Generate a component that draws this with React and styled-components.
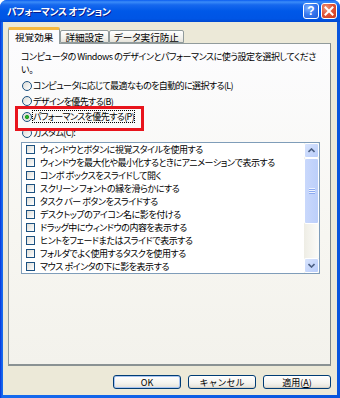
import React from "react";
import styled, { createGlobalStyle } from "styled-components";

const GlobalStyle = createGlobalStyle`
  html, body {
    margin: 0;
    padding: 0;
    background: #ffffff;
  }
  body {
    font-family: "Noto Sans CJK JP", "Noto Sans", sans-serif;
    font-feature-settings: "palt";
  }
`;

const effects = [
  "ウィンドウとボタンに視覚スタイルを使用する",
  "ウィンドウを最大化や最小化するときにアニメーションで表示する",
  "コンボ ボックスをスライドして開く",
  "スクリーン フォントの縁を滑らかにする",
  "タスク バー ボタンをスライドする",
  "デスクトップのアイコン名に影を付ける",
  "ドラッグ中にウィンドウの内容を表示する",
  "ヒントをフェードまたはスライドで表示する",
  "フォルダでよく使用するタスクを使用する",
  "マウス ポインタの下に影を表示する",
];

const choices = [
  { id: "auto", label: "コンピュータに応じて最適なものを自動的に選択する(L)" },
  { id: "design", label: "デザインを優先する(B)" },
  { id: "perf", label: "パフォーマンスを優先する(P)", checked: true, marked: true },
  { id: "custom", label: "カスタム(C):" },
];

export default function App() {
  return (
    <>
      <GlobalStyle />
      <Window>
        <TitleBar>
          <Title>パフォーマンス オプション</Title>
          <CaptionButton $kind="help">?</CaptionButton>
          <CaptionButton $kind="close">
            <svg width="10" height="10" viewBox="0 0 10 10">
              <path d="M1.5 1.5 L8.5 8.5 M8.5 1.5 L1.5 8.5" stroke="#fff" strokeWidth="2" strokeLinecap="square" />
            </svg>
          </CaptionButton>
        </TitleBar>

        <Body>
          <Tabs>
            <Tab $active>視覚効果</Tab>
            <Tab>詳細設定</Tab>
            <Tab>データ実行防止</Tab>
          </Tabs>

          <Panel>
            <Intro>
              コンピュータの Windows のデザインとパフォーマンスに使う設定を選択してくださ
              <br />
              い。
            </Intro>

            <RadioGroup>
              {choices.map((c) => (
                <RadioRow key={c.id}>
                  <Radio $checked={c.checked} />
                  <RadioLabel $focused={c.marked}>{c.label}</RadioLabel>
                  {c.marked && <Highlight />}
                </RadioRow>
              ))}
            </RadioGroup>

            <ListBox>
              <Items>
                {effects.map((text) => (
                  <Item key={text}>
                    <Check />
                    <span>{text}</span>
                  </Item>
                ))}
              </Items>
              <ScrollBar>
                <ScrollButton>
                  <svg width="7" height="5" viewBox="0 0 7 5">
                    <path d="M0.5 4 L3.5 1 L6.5 4" fill="none" stroke="#4d6185" strokeWidth="1.6" />
                  </svg>
                </ScrollButton>
                <Track>
                  <Thumb>
                    <Grip />
                  </Thumb>
                </Track>
                <ScrollButton>
                  <svg width="7" height="5" viewBox="0 0 7 5">
                    <path d="M0.5 1 L3.5 4 L6.5 1" fill="none" stroke="#4d6185" strokeWidth="1.6" />
                  </svg>
                </ScrollButton>
              </ScrollBar>
            </ListBox>
          </Panel>

          <Buttons>
            <Button $default>OK</Button>
            <Button>キャンセル</Button>
            <Button>
              適用(<u>A</u>)
            </Button>
          </Buttons>
        </Body>
      </Window>
    </>
  );
}

const Window = styled.div`
  width: 340px;
  height: 398px;
  display: flex;
  flex-direction: column;
  background: linear-gradient(to right, #0831d9 0, #166aee 2px, #0855dd 100%);
  border-radius: 7px 7px 0 0;
  overflow: hidden;
`;

const TitleBar = styled.div`
  height: 22px;
  flex: none;
  display: flex;
  align-items: center;
  gap: 2px;
  padding: 0 3px 0 7px;
  background: linear-gradient(
    to bottom,
    #0a5cf0 0%,
    #3b8cf8 9%,
    #1668ee 22%,
    #0058e8 50%,
    #0055e5 85%,
    #0048d0 100%
  );
`;

const Title = styled.span`
  flex: 1;
  color: #ffffff;
  font-size: 9.6px;
  font-weight: bold;
  letter-spacing: -0.3px;
  text-shadow: 1px 1px 0 #0a1a8a;
`;

const CaptionButton = styled.button`
  width: 16px;
  height: 16px;
  padding: 0;
  display: flex;
  align-items: center;
  justify-content: center;
  border: 1px solid #ffffff;
  border-radius: 3px;
  color: #ffffff;
  font: bold 12px "Liberation Sans", sans-serif;
  background: ${(p) =>
    p.$kind === "close"
      ? "radial-gradient(circle at 30% 30%, #f29b7c 0%, #e0553a 45%, #c9391a 100%)"
      : "radial-gradient(circle at 30% 30%, #7fb0ff 0%, #3a7bf0 45%, #1f5ad8 100%)"};
`;

const Body = styled.div`
  flex: 1;
  margin: 0 3px 3px;
  padding: 5px 6px 6px 5px;
  display: flex;
  flex-direction: column;
  background: #ece9d8;
  font-size: 9px;
  letter-spacing: -0.45px;
`;

const Tabs = styled.div`
  height: 16px;
  display: flex;
  align-items: flex-end;
  position: relative;
  z-index: 1;
`;

const Tab = styled.div`
  box-sizing: border-box;
  height: ${(p) => (p.$active ? "17px" : "13px")};
  margin-bottom: ${(p) => (p.$active ? "-1px" : "0")};
  padding: 0 ${(p) => (p.$active ? "6px" : "4px")};
  display: flex;
  align-items: center;
  font-size: 9.6px;
  letter-spacing: 0;
  color: #000000;
  border: 1px solid #919b9c;
  border-bottom: ${(p) => (p.$active ? "none" : "1px solid #919b9c")};
  border-top: ${(p) => (p.$active ? "3px solid #f6b93f" : "1px solid #919b9c")};
  border-radius: 2px 2px 0 0;
  background: ${(p) =>
    p.$active ? "#fcfcfe" : "linear-gradient(to bottom, #ffffff, #f0efea 70%, #e4e2da)"};
`;

const Panel = styled.div`
  box-sizing: border-box;
  height: 323px;
  flex: none;
  padding: 6px 10px 0 12px;
  border: 1px solid #919b9c;
  border-right-color: #7f8788;
  border-bottom: 2px solid #8a9293;
  background: linear-gradient(to bottom, #fcfcfe 0%, #f7f6f1 60%, #f3f2ec 100%);
  color: #000000;
`;

const Intro = styled.p`
  margin: 0;
  line-height: 13px;
  white-space: nowrap;
`;

const RadioGroup = styled.div`
  margin-top: 2px;
  display: flex;
  flex-direction: column;
`;

const RadioRow = styled.div`
  position: relative;
  height: 15.6px;
  display: flex;
  align-items: center;
  padding-left: 1px;
`;

const Radio = styled.span`
  box-sizing: border-box;
  width: 10px;
  height: 10px;
  margin-right: 1px;
  flex: none;
  border-radius: 50%;
  border: 1px solid #1c5180;
  background: ${(p) =>
    p.$checked
      ? "radial-gradient(circle, #2fb82f 0, #21a121 1.6px, #dcdcd7 2.4px, #ffffff 100%)"
      : "linear-gradient(135deg, #dcdcd7, #ffffff)"};
`;

const RadioLabel = styled.span`
  white-space: nowrap;
  line-height: 11px;
  letter-spacing: -0.6px;
  outline: ${(p) => (p.$focused ? "1px dotted #000000" : "none")};
  outline-offset: 0;
`;

const Highlight = styled.div`
  position: absolute;
  left: -6px;
  top: -3px;
  width: 129px;
  height: 25px;
  box-sizing: border-box;
  border: 3px solid #e8141c;
  z-index: 2;
  pointer-events: none;
`;

const ListBox = styled.div`
  box-sizing: border-box;
  height: 132px;
  margin-top: 2px;
  display: flex;
  border: 1px solid #7f9db9;
  background: #ffffff;
`;

const Items = styled.div`
  flex: 1;
  display: flex;
  flex-direction: column;
`;

const Item = styled.div`
  height: 13px;
  display: flex;
  align-items: center;
  padding-left: 4px;
  white-space: nowrap;
`;

const Check = styled.span`
  box-sizing: border-box;
  width: 9px;
  height: 9px;
  margin-right: 5px;
  flex: none;
  border: 1px solid #1c5180;
  background: linear-gradient(135deg, #dcdcd7, #ffffff);
`;

const ScrollBar = styled.div`
  width: 15px;
  display: flex;
  flex-direction: column;
  background: #f4f3ee;
`;

const ScrollButton = styled.div`
  box-sizing: border-box;
  height: 15px;
  display: flex;
  align-items: center;
  justify-content: center;
  border: 1px solid #ffffff;
  border-radius: 2px;
  background: linear-gradient(to bottom right, #d8e4fd, #b9cdfa);
`;

const Track = styled.div`
  flex: 1;
  padding: 0 0 34px;
  display: flex;
  background: linear-gradient(to right, #eeede5, #fcfcf9);
`;

const Thumb = styled.div`
  flex: 1;
  box-sizing: border-box;
  display: flex;
  align-items: center;
  justify-content: center;
  border: 1px solid #ffffff;
  border-radius: 2px;
  background: linear-gradient(to right, #c9d8fc, #bccffa);
`;

const Grip = styled.div`
  width: 6px;
  height: 6px;
  background: repeating-linear-gradient(
    to bottom,
    #eef3fe 0,
    #eef3fe 1px,
    #8caaf0 1px,
    #8caaf0 2px
  );
`;

const Buttons = styled.div`
  margin-top: 9px;
  display: flex;
  justify-content: flex-end;
  gap: 7px;
`;

const Button = styled.button`
  box-sizing: border-box;
  width: 68px;
  height: 14px;
  padding: 0;
  display: flex;
  align-items: center;
  justify-content: center;
  font-family: "Noto Sans CJK JP", sans-serif;
  font-size: 9px;
  letter-spacing: 0;
  color: #000000;
  border: 1px solid #003c74;
  border-radius: 3px;
  background: linear-gradient(to bottom, #ffffff 0%, #f4f3ee 60%, #e3e0d6 100%);
  box-shadow: ${(p) =>
    p.$default ? "inset 0 0 0 1px #a9c4f0" : "inset 0 -1px 0 #d6d0c5"};

  u {
    text-decoration: underline;
  }
`;
